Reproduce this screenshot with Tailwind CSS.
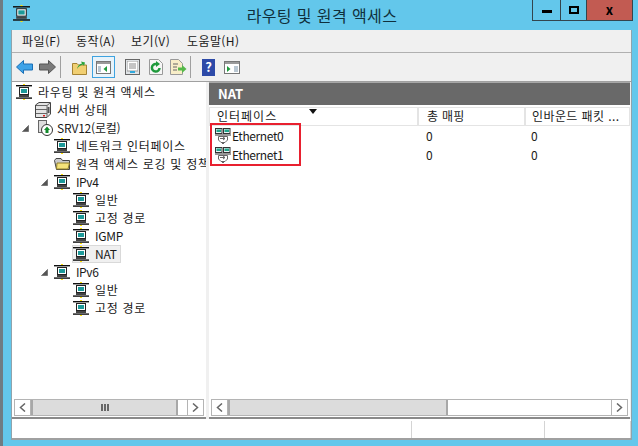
<!DOCTYPE html>
<html lang="ko">
  <head>
    <meta charset="UTF-8">
    <title>라우팅 및 원격 액세스</title>
    <script src="https://cdn.jsdelivr.net/npm/@tailwindcss/browser@4"></script>
  </head>
  <body class="w-[638px] h-[446px] overflow-hidden bg-[#63c7eb] text-[12px] leading-[18px] text-[#1a1a1a] font-['Malgun_Gothic','Noto_Sans_CJK_KR',sans-serif]">
    <!-- shared icons -->
    <svg width="0" height="0" class="absolute">
      <symbol id="rras" viewBox="0 0 16 16">
        <rect x="0" y="1" width="16" height="1.4" fill="#111"/>
        <rect x="0" y="13.4" width="16" height="1.4" fill="#111"/>
        <rect x="7" y="0" width="2" height="1" fill="#ffe000"/>
        <rect x="7" y="15" width="2" height="1" fill="#ffe000"/>
        <rect x="3.5" y="3.5" width="9" height="7" fill="#fff" stroke="#222"/>
        <rect x="5" y="5" width="6" height="4" fill="#1d9a9a"/>
        <rect x="3" y="11" width="10" height="2" fill="#444"/>
      </symbol>
      <symbol id="eth" viewBox="0 0 16 16">
        <rect x="0.5" y="0.5" width="6.5" height="5" fill="#e8f4f4" stroke="#333"/>
        <rect x="8.5" y="0.5" width="6.5" height="5" fill="#e8f4f4" stroke="#333"/>
        <rect x="1.5" y="1.5" width="4.5" height="2.5" fill="#1fa58a"/>
        <rect x="9.5" y="1.5" width="4.5" height="2.5" fill="#1fa58a"/>
        <rect x="0" y="6.5" width="16" height="1" fill="#333"/>
        <path d="M3.500 8.500H12.500V12L10 14.500H6L3.500 12Z" fill="#fff" stroke="#666"/>
        <path d="M5 10.500h5M8 9l2 1.500L8 12" fill="none" stroke="#666"/>
        <rect x="7" y="14" width="2" height="2" fill="#666"/>
      </symbol>
      <symbol id="expander" viewBox="0 0 7 7">
        <path d="M6.5 0.5V6.5H0.5Z" fill="#555" stroke="#777"/>
      </symbol>
    </svg>

    <div class="flex flex-col h-full border-l-[3px] border-[#6f7c83]">
      <!-- title bar -->
      <div class="relative flex h-[30px] shrink-0 items-center justify-center pl-[3px] text-[16px] text-[#10303c]">
        <svg class="absolute left-[10px] top-[5px]" width="17" height="17"><use href="#rras"/></svg>
        <span class="tracking-[0.4px]">라우팅 및 원격 액세스</span>
        <div class="absolute right-[5px] top-0 flex h-[21px] border border-t-0 border-[#33454d]">
          <div class="flex w-[28px] items-center justify-center border-r border-[#33454d]"><div class="mt-[3px] h-[3px] w-[10px] bg-black"></div></div>
          <div class="flex w-[26px] items-center justify-center border-r border-[#33454d]"><div class="mb-[1px] h-[8px] w-[10px] border-2 border-black"></div></div>
          <div class="flex w-[45px] items-center justify-center bg-[#c25b52] text-[13px] font-bold text-black">x</div>
        </div>
      </div>

      <div class="flex min-h-0 flex-1 flex-col ml-[8px] mr-[6px] mb-[6px] border-l border-r border-[#8fa3ac] bg-[#f0f0f0]">
        <!-- menu -->
        <div class="flex h-[23px] shrink-0 items-center border-b border-[#b0b0b0] pl-[10px] tracking-[0.4px]">
          <span class="w-[54px]">파일(F)</span><span class="w-[55px]">동작(A)</span><span class="w-[56px]">보기(V)</span><span>도움말(H)</span>
        </div>

        <!-- toolbar -->
        <div class="flex h-[29px] shrink-0 items-center border-b border-[#a0a0a0] pl-[4px]">
          <svg width="17" height="14" viewBox="0 0 17 14"><path d="M0.5 7L7.5 0.5V4H16.5V10H7.5V13.5Z" fill="#3ea3e8" stroke="#1b6fb5"/></svg>
          <svg class="ml-[6px]" width="17" height="14" viewBox="0 0 17 14"><path d="M16.500 7L9.500 0.500V4H0.500V10H9.500V13.500Z" fill="#7a7a7a" stroke="#555"/></svg>
          <div class="ml-[4px] h-[22px] w-px bg-[#a0a0a0]"></div>
          <svg class="ml-[11px]" width="15" height="15" viewBox="0 0 15 15"><path d="M0.500 3.500H5L6.500 5H14.500V14.500H0.500Z" fill="#f1cf72" stroke="#a58334"/><path d="M5 9C6 5 8 4 10 3.500L9 1.500L13 2.500L12 6L11 4.500C9 5 7 6 5 9Z" fill="#29a33a"/></svg>
          <div class="ml-[5px] flex h-[22px] w-[23px] items-center justify-center border border-[#3ea3e0] bg-[#e8f3fa]">
            <svg width="15" height="13" viewBox="0 0 15 13"><rect x="0.500" y="0.500" width="14" height="12" fill="#fff" stroke="#777"/><rect x="1" y="1" width="13" height="2" fill="#9a9a9a"/><rect x="2" y="5" width="3" height="6" fill="#b9c7d2"/><path d="M11 5V11L7.500 8Z" fill="#1f9a3c"/></svg>
          </div>
          <div class="ml-[10px] flex h-[16px] w-[15px] items-center justify-center border border-[#666] bg-[#dfe3e6]">
            <svg width="11" height="12" viewBox="0 0 11 12"><rect x="0" y="0" width="11" height="10" fill="#fff" stroke="#999"/><path d="M2 3h7M2 5h7M2 7h7" stroke="#8a8a8a"/><rect x="3" y="10" width="5" height="2" fill="#2ea8dc"/></svg>
          </div>
          <svg class="ml-[9px]" width="14" height="16" viewBox="0 0 14 16"><path d="M0.500 0.500H9.500L13.500 4.500V15.500H0.500Z" fill="#f6f6f6" stroke="#999"/><path d="M10.500 9A3.800 3.800 0 1 1 7 5" fill="none" stroke="#1f9a3c" stroke-width="2.500"/><path d="M7 2L11 5L7 8Z" fill="#1f9a3c"/></svg>
          <svg class="ml-[7px]" width="17" height="16" viewBox="0 0 17 16"><path d="M0.500 0.500H8.500L12.500 4.500V15.500H0.500Z" fill="#f8eec8" stroke="#999"/><path d="M3 5h5M3 8h4M3 11h4" stroke="#666"/><path d="M8 8.500H12V6L16.500 10L12 14V11.500H8Z" fill="#55b849"/></svg>
          <div class="ml-[3px] h-[22px] w-px bg-[#a0a0a0]"></div>
          <div class="ml-[11px] flex h-[17px] w-[13px] items-center justify-center bg-[#2d4aa8] text-[13px] font-bold text-white">?</div>
          <svg class="ml-[9px]" width="16" height="13" viewBox="0 0 16 13"><rect x="0.500" y="0.500" width="15" height="12" fill="#fff" stroke="#777"/><rect x="1" y="1" width="14" height="2" fill="#9a9a9a"/><path d="M3 5V11L6.500 8Z" fill="#1f9a3c"/><rect x="10" y="5" width="4" height="6" fill="#b9c7d2"/></svg>
        </div>

        <!-- panes -->
        <div class="flex min-h-0 flex-1 gap-[3px] pr-px">
          <!-- tree -->
          <div class="flex w-[194px] shrink-0 flex-col border-b-[2px] border-[#8a8a8a] bg-white">
            <div class="min-h-0 flex-1 overflow-hidden pt-[1px] pl-[4px] whitespace-nowrap tracking-[0.7px]">
              <div class="flex h-[18px] items-center"><svg class="mr-[6px] shrink-0" width="16" height="16"><use href="#rras"/></svg>라우팅 및 원격 액세스</div>
              <div class="flex h-[18px] items-center pl-[19px]">
                <svg class="mr-[6px] shrink-0" width="16" height="16" viewBox="0 0 16 16"><path d="M0.500 3L4 0.500H15.500V12L12 15.500H0.500Z" fill="#e4e4e4" stroke="#444"/><path d="M1 3.500H12V15M12 3.500L15 1M1 7.500H12M1 11.500H12" fill="none" stroke="#666"/><rect x="8" y="13" width="2" height="1.500" fill="#e02020"/><rect x="12.500" y="5" width="2" height="6" fill="#555"/></svg>서버 상태
              </div>
              <div class="flex h-[18px] items-center pl-[6px] tracking-[-0.2px]">
                <svg class="mr-[8px] shrink-0" width="7" height="7"><use href="#expander"/></svg>
                <svg class="mr-[4px] shrink-0" width="16" height="16" viewBox="0 0 16 16"><rect x="1.500" y="0.500" width="8" height="12" fill="#ddd" stroke="#666"/><circle cx="10" cy="10" r="5.500" fill="#fff" stroke="#333"/><path d="M10 6.500L13 10H11.500V13H8.500V10H7Z" fill="#128a2a"/></svg>SRV12(로컬)
              </div>
              <div class="flex h-[18px] items-center pl-[38px]"><svg class="mr-[6px] shrink-0" width="16" height="16"><use href="#rras"/></svg>네트워크 인터페이스</div>
              <div class="flex h-[18px] items-center pl-[38px]">
                <svg class="mr-[6px] shrink-0" width="16" height="16" viewBox="0 0 16 16"><path d="M0.500 4.500L2 2.500H7L8.500 4.500H15.500V13.500H2.500Z" fill="#c9c9c9" stroke="#444"/><path d="M3 7H15.500L14 13H2.500Z" fill="#f5e37a" stroke="#8f7f2a"/></svg>원격 액세스 로깅 및 정책
              </div>
              <div class="flex h-[18px] items-center pl-[25px] tracking-[-0.4px]">
                <svg class="mr-[6px] shrink-0" width="7" height="7"><use href="#expander"/></svg>
                <svg class="mr-[6px] shrink-0" width="16" height="16"><use href="#rras"/></svg>IPv4
              </div>
              <div class="flex h-[18px] items-center pl-[57px]"><svg class="mr-[6px] shrink-0" width="16" height="16"><use href="#rras"/></svg>일반</div>
              <div class="flex h-[18px] items-center pl-[57px]"><svg class="mr-[6px] shrink-0" width="16" height="16"><use href="#rras"/></svg>고정 경로</div>
              <div class="flex h-[18px] items-center pl-[57px] tracking-[-0.3px]"><svg class="mr-[6px] shrink-0" width="16" height="16"><use href="#rras"/></svg>IGMP</div>
              <div class="flex h-[18px] items-center pl-[56px] tracking-[-0.3px]">
                <div class="flex h-[18px] w-[49px] items-center border border-[#d9d9d9] bg-[#f0f0f0]"><svg class="mr-[6px] shrink-0" width="16" height="16"><use href="#rras"/></svg>NAT</div>
              </div>
              <div class="flex h-[18px] items-center pl-[25px] tracking-[-0.4px]">
                <svg class="mr-[6px] shrink-0" width="7" height="7"><use href="#expander"/></svg>
                <svg class="mr-[6px] shrink-0" width="16" height="16"><use href="#rras"/></svg>IPv6
              </div>
              <div class="flex h-[18px] items-center pl-[57px]"><svg class="mr-[6px] shrink-0" width="16" height="16"><use href="#rras"/></svg>일반</div>
              <div class="flex h-[18px] items-center pl-[57px]"><svg class="mr-[6px] shrink-0" width="16" height="16"><use href="#rras"/></svg>고정 경로</div>
            </div>
            <!-- tree scrollbar -->
            <div class="mx-[2px] mb-[1px] flex h-[17px] border border-[#b4b4b4] bg-white">
              <div class="flex w-[16px] items-center justify-center border-r border-[#b4b4b4]">
                <svg width="7" height="9" viewBox="0 0 7 9"><path d="M6 0.500L1.500 4.500L6 8.500" fill="none" stroke="#666" stroke-width="1.500"/></svg>
              </div>
              <div class="flex w-[147px] items-center justify-center gap-[1px] border-x-[2px] border-[#a8a8a8] bg-[#dcdcdc]">
                <div class="h-[7px] w-[2px] bg-[#666]"></div><div class="h-[7px] w-[2px] bg-[#666]"></div><div class="h-[7px] w-[2px] bg-[#666]"></div>
              </div>
              <div class="flex-1"></div>
              <div class="flex w-[16px] items-center justify-center border-l border-[#b4b4b4]">
                <svg width="7" height="9" viewBox="0 0 7 9"><path d="M1 0.500L5.500 4.500L1 8.500" fill="none" stroke="#666" stroke-width="1.500"/></svg>
              </div>
            </div>
          </div>

          <!-- result pane -->
          <div class="flex min-w-0 flex-1 flex-col border-b-[2px] border-[#8a8a8a] bg-white">
            <div class="flex h-[23px] shrink-0 items-center border-t border-[#a8a8a8] bg-[#696969] pl-[9px] text-[13px] font-bold text-white">NAT</div>
            <div class="mt-[2px] flex h-[19px] shrink-0 border border-[#e4e4e4] leading-[16px]">
              <div class="relative w-[209px] shrink-0 border-r-[2px] border-[#e4e4e4] pl-[7px] tracking-[1px]">인터페이스<svg class="absolute left-[99px] top-[1px]" width="8" height="5" viewBox="0 0 8 5"><path d="M0 0H8L4 5Z" fill="#111"/></svg></div>
              <div class="w-[107px] shrink-0 border-r-[2px] border-[#e4e4e4] pl-[8px] tracking-[0.3px]">총 매핑</div>
              <div class="min-w-0 flex-1 overflow-hidden whitespace-nowrap pl-[6px] tracking-[0.4px]">인바운드 패킷 ...</div>
            </div>
            <div class="relative flex-1">
              <div class="flex h-[19px] items-center pl-[6px]">
                <svg class="mr-[1px] shrink-0" width="16" height="16"><use href="#eth"/></svg>
                <span class="w-[194px] shrink-0 tracking-[-0.4px]">Ethernet0</span><span class="w-[105px] shrink-0">0</span><span>0</span>
              </div>
              <div class="flex h-[19px] items-center pl-[6px]">
                <svg class="mr-[1px] shrink-0" width="16" height="16"><use href="#eth"/></svg>
                <span class="w-[194px] shrink-0 tracking-[-0.4px]">Ethernet1</span><span class="w-[105px] shrink-0">0</span><span>0</span>
              </div>
              <!-- red annotation box -->
              <div class="absolute left-[1px] top-[-3px] h-[43px] w-[91px] border-[2px] border-[#e8202f]"></div>
            </div>
            <!-- result scrollbar -->
            <div class="mx-[2px] mb-[1px] flex h-[17px] border border-[#b4b4b4] bg-white">
              <div class="flex w-[16px] items-center justify-center border-r border-[#b4b4b4]">
                <svg width="7" height="9" viewBox="0 0 7 9"><path d="M6 0.500L1.500 4.500L6 8.500" fill="none" stroke="#666" stroke-width="1.500"/></svg>
              </div>
              <div class="w-[220px] border-x-[2px] border-[#a8a8a8] bg-[#dcdcdc]"></div>
              <div class="flex-1"></div>
              <div class="flex w-[16px] items-center justify-center border-l border-[#b4b4b4]">
                <svg width="7" height="9" viewBox="0 0 7 9"><path d="M1 0.500L5.500 4.500L1 8.500" fill="none" stroke="#666" stroke-width="1.500"/></svg>
              </div>
            </div>
          </div>
        </div>

        <!-- status bar -->
        <div class="flex h-[21px] shrink-0 border-b-[2px] border-[#a0a0a0] bg-white pt-[2px]">
          <div class="w-[400px] border-r border-[#d4d4d4]"></div>
          <div class="w-[133px] border-r border-[#d4d4d4]"></div>
          <div class="flex-1 border-r border-[#d4d4d4]"></div>
        </div>
      </div>
    </div>
  </body>
</html>
